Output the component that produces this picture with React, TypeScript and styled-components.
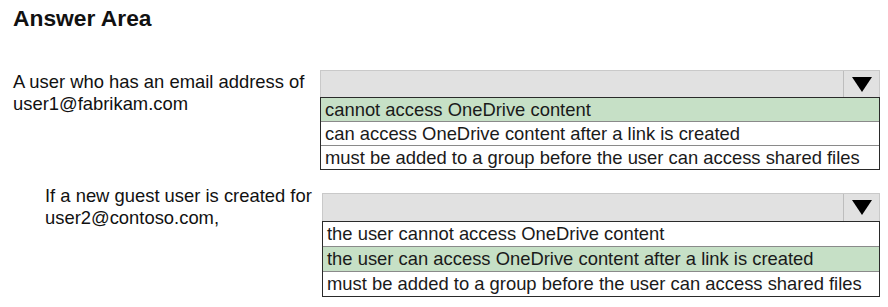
import styled, { createGlobalStyle } from "styled-components";

const GlobalStyle = createGlobalStyle`
  html, body {
    margin: 0;
    padding: 0;
    background: #ffffff;
  }
  body {
    font-family: "Liberation Sans", Arial, sans-serif;
    color: #111111;
  }
`;

const Page = styled.div`
  width: 888px;
  height: 307px;
  padding: 5px 0 0 13px;
  box-sizing: border-box;
  display: flex;
  flex-direction: column;
`;

const Title = styled.h1`
  margin: 0 0 39px 0;
  font-size: 22.8px;
  font-weight: 700;
  line-height: 26px;
  color: #111111;
`;

const Rows = styled.div`
  display: flex;
  flex-direction: column;
  gap: 23px;
`;

const Row = styled.div<{ $labelWidth: number; $indent: number }>`
  display: grid;
  grid-template-columns: ${(p) => p.$labelWidth}px ${(p) => 560 - (p.$labelWidth - 307)}px;
  align-items: start;

  & > :first-child {
    padding-left: ${(p) => p.$indent}px;
  }
`;

const Label = styled.div<{ $shift: number }>`
  font-size: 18.4px;
  line-height: 22px;
  margin-top: ${(p) => p.$shift}px;
  white-space: nowrap;
`;

const Dropdown = styled.div`
  display: flex;
  flex-direction: column;
`;

const Header = styled.div<{ $height: number }>`
  height: ${(p) => p.$height}px;
  box-sizing: border-box;
  background: #e1e1e1;
  border: 1px solid #c9c9c9;
  border-bottom: none;
  display: flex;
  justify-content: flex-end;
`;

const ArrowButton = styled.div`
  width: 35px;
  border-left: 1px solid #bdbdbd;
  display: flex;
  align-items: center;
  justify-content: center;
`;

const OptionList = styled.div`
  border: 1px solid #2a2a2a;
  display: flex;
  flex-direction: column;
`;

const Option = styled.div<{ $selected?: boolean; $height: number }>`
  height: ${(p) => p.$height}px;
  line-height: ${(p) => p.$height}px;
  font-size: 18.4px;
  padding-left: 4px;
  white-space: nowrap;
  background: ${(p) => (p.$selected ? "#c6e0c6" : "#ffffff")};
  color: #1a1a1a;
  border-bottom: 1px solid #8a8a8a;

  &:last-child {
    border-bottom: none;
  }
`;

function Arrow() {
  return (
    <svg width="20" height="15" viewBox="0 0 20 15">
      <polygon points="0,0 20,0 10,15" fill="#000" />
    </svg>
  );
}

const questions = [
  {
    label: ["A user who has an email address of", "user1@fabrikam.com"],
    labelWidth: 307,
    indent: 0,
    shift: 1,
    headerHeight: 27,
    rowHeight: 23,
    options: [
      "cannot access OneDrive content",
      "can access OneDrive content after a link is created",
      "must be added to a group before the user can access shared files",
    ],
    selected: 0,
  },
  {
    label: ["If a new guest user is created for", "user2@contoso.com,"],
    labelWidth: 309,
    indent: 32,
    shift: -8,
    headerHeight: 28,
    rowHeight: 24,
    options: [
      "the user cannot access OneDrive content",
      "the user can access OneDrive content after a link is created",
      "must be added to a group before the user can access shared files",
    ],
    selected: 1,
  },
];

export default function App() {
  return (
    <>
      <GlobalStyle />
      <Page>
        <Title>Answer Area</Title>
        <Rows>
          {questions.map((q, i) => (
            <Row key={i} $labelWidth={q.labelWidth} $indent={q.indent}>
              <Label $shift={q.shift}>
                {q.label[0]}
                <br />
                {q.label[1]}
              </Label>
              <Dropdown>
                <Header $height={q.headerHeight}>
                  <ArrowButton>
                    <Arrow />
                  </ArrowButton>
                </Header>
                <OptionList>
                  {q.options.map((o, j) => (
                    <Option key={j} $selected={j === q.selected} $height={q.rowHeight}>
                      {o}
                    </Option>
                  ))}
                </OptionList>
              </Dropdown>
            </Row>
          ))}
        </Rows>
      </Page>
    </>
  );
}
